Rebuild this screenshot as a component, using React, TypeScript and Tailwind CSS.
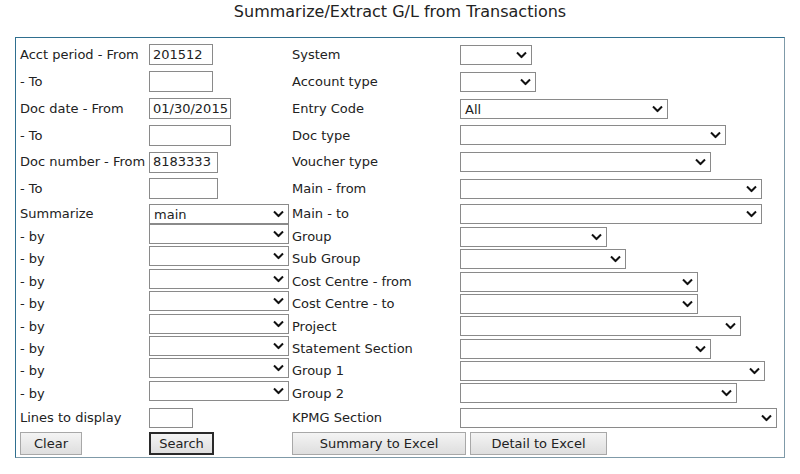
import type { ReactNode } from 'react';
import { clsx } from 'clsx';

// Summarize/Extract G/L screen – plain table-like form

function Chevron() {
  return (
    <svg width="11" height="7" viewBox="0 0 11 7" className="pointer-events-none absolute right-[5px] top-1/2 -translate-y-1/2">
      <path d="M1 1 L5.5 5.5 L10 1" fill="none" stroke="#111" strokeWidth="2" />
    </svg>
  );
}

function Select({ width, value }: { width: string; value?: string }) {
  return (
    <span className={clsx('relative inline-block h-[20px]', width)}>
      <span className="flex h-full w-full items-end border border-[#8a8a8a] bg-white pb-[1px] pl-[4px] text-[13px] leading-[15px] text-[#222]">
        {value}
      </span>
      <Chevron />
    </span>
  );
}

function TextInput({ width, value, h = 'h-[21px]' }: { width: string; value?: string; h?: string }) {
  return (
    <span
      className={clsx(
        'flex items-center border border-[#8a8a8a] bg-white pl-[3px] text-[13px] text-[#222]',
        width,
        h
      )}
    >
      {value}
    </span>
  );
}

interface Row {
  h: string;
  label: string;
  control: ReactNode;
  right: string;
  rightControl: ReactNode;
}

const rows: Row[] = [
  { h: 'h-[26.8px]', label: 'Acct period - From', control: <TextInput width="w-[64px]" value="201512" />, right: 'System', rightControl: <Select width="w-[72px]" /> },
  { h: 'h-[26.8px]', label: '- To', control: <TextInput width="w-[64px]" />, right: 'Account type', rightControl: <Select width="w-[76px]" /> },
  { h: 'h-[26.8px]', label: 'Doc date - From', control: <TextInput width="w-[82px]" value="01/30/2015" />, right: 'Entry Code', rightControl: <Select width="w-[208px]" value="All" /> },
  { h: 'h-[26.8px]', label: '- To', control: <TextInput width="w-[82px]" />, right: 'Doc type', rightControl: <Select width="w-[266px]" /> },
  { h: 'h-[26.8px]', label: 'Doc number - From', control: <TextInput width="w-[69px]" value="8183333" />, right: 'Voucher type', rightControl: <Select width="w-[251px]" /> },
  { h: 'h-[26.8px]', label: '- To', control: <TextInput width="w-[69px]" />, right: 'Main - from', rightControl: <Select width="w-[302px]" /> },
  { h: 'h-[23.2px]', label: 'Summarize', control: <Select width="w-[140px]" value="main" />, right: 'Main - to', rightControl: <Select width="w-[302px]" /> },
  { h: 'h-[22.4px]', label: '- by', control: <Select width="w-[140px]" />, right: 'Group', rightControl: <Select width="w-[147px]" /> },
  { h: 'h-[22.4px]', label: '- by', control: <Select width="w-[140px]" />, right: 'Sub Group', rightControl: <Select width="w-[166px]" /> },
  { h: 'h-[22.4px]', label: '- by', control: <Select width="w-[140px]" />, right: 'Cost Centre - from', rightControl: <Select width="w-[238px]" /> },
  { h: 'h-[22.4px]', label: '- by', control: <Select width="w-[140px]" />, right: 'Cost Centre - to', rightControl: <Select width="w-[238px]" /> },
  { h: 'h-[22.4px]', label: '- by', control: <Select width="w-[140px]" />, right: 'Project', rightControl: <Select width="w-[281px]" /> },
  { h: 'h-[22.4px]', label: '- by', control: <Select width="w-[140px]" />, right: 'Statement Section', rightControl: <Select width="w-[251px]" /> },
  { h: 'h-[22.4px]', label: '- by', control: <Select width="w-[140px]" />, right: 'Group 1', rightControl: <Select width="w-[305px]" /> },
  { h: 'h-[22.4px]', label: '- by', control: <Select width="w-[140px]" />, right: 'Group 2', rightControl: <Select width="w-[277px]" /> },
  { h: 'h-[26.8px]', label: 'Lines to display', control: <TextInput width="w-[44px]" h="h-[20px]" />, right: 'KPMG Section', rightControl: <Select width="w-[317px]" /> },
];

function Button({ children, width, active }: { children: ReactNode; width: string; active?: boolean }) {
  return (
    <button
      type="button"
      className={clsx(
        'flex h-[23px] items-center justify-center bg-gradient-to-b from-[#f4f4f4] to-[#dedede] text-[13px] text-[#222]',
        active ? 'border-2 border-[#2a2a2a]' : 'border border-[#a8a8a8]',
        width
      )}
    >
      {children}
    </button>
  );
}

export default function App() {
  return (
    <div className="min-h-[474px] w-[800px] bg-white font-['DejaVu_Sans',Verdana,sans-serif] text-[#222]">
      <h1 className="pt-[3px] text-center text-[16px] leading-[18px]">Summarize/Extract G/L from Transactions</h1>

      <div className="ml-[15px] mt-[16px] w-[770px] border border-b-[#7f9aa8] border-l-[#2f6f8f] border-r-[#7f9aa8] border-t-[#2f6f8f] pb-[1px] pl-[4px] pt-[3.6px]">
        {rows.map((row, i) => (
          <div key={i} className={clsx('flex items-center text-[13px]', row.h)}>
            <span className="w-[129px] shrink-0">{row.label}</span>
            <span className="w-[143px] shrink-0">{row.control}</span>
            <span className="w-[168px] shrink-0">{row.right}</span>
            <span className="flex">{row.rightControl}</span>
          </div>
        ))}

        <div className="flex h-[25px] items-center">
          <span className="w-[129px] shrink-0">
            <Button width="w-[62px]">Clear</Button>
          </span>
          <span className="w-[143px] shrink-0">
            <Button width="w-[65px]" active>
              Search
            </Button>
          </span>
          <span className="flex gap-[4px]">
            <Button width="w-[174px]">Summary to Excel</Button>
            <Button width="w-[137px]">Detail to Excel</Button>
          </span>
        </div>
      </div>
    </div>
  );
}
